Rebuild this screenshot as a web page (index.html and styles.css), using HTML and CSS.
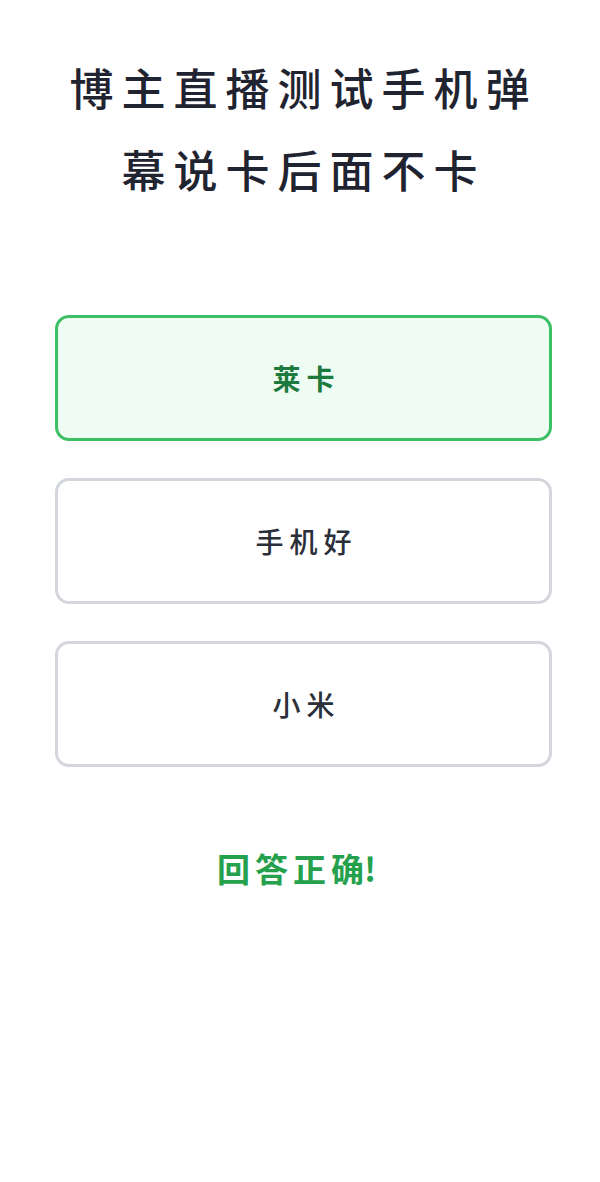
FILE: index.html
```html
<!DOCTYPE html>
<html lang="zh-CN">
<head>
<meta charset="utf-8">
<link rel="stylesheet" href="styles.css">
</head>
<body>
<main class="quiz">
  <h1 class="question">博主直播测试手机弹<br>幕说卡后面不卡</h1>
  <div class="options">
    <button class="option correct">莱卡</button>
    <button class="option">手机好</button>
    <button class="option">小米</button>
  </div>
  <p class="feedback"><span class="spaced">回答正</span>确!</p>
</main>
</body>
</html>
```
FILE: styles.css
```css
html, body {
  margin: 0;
  padding: 0;
  background: #ffffff;
}
body {
  font-family: "Noto Sans CJK SC", "Noto Sans", sans-serif;
  color: #1f2430;
}
.quiz {
  display: flex;
  flex-direction: column;
  align-items: center;
  padding: 46px 48px 0 55px;
}
.question {
  margin: 0;
  font-size: 44px;
  font-weight: 500;
  line-height: 82px;
  letter-spacing: 8px;
  text-align: center;
  color: #1f2430;
}
.options {
  width: 100%;
  display: flex;
  flex-direction: column;
  gap: 37px;
  margin-top: 105px;
}
.option {
  box-sizing: border-box;
  width: 100%;
  height: 126px;
  border: 3px solid #d4d6dd;
  border-radius: 14px;
  background: #ffffff;
  font-family: "Noto Sans CJK SC", "Noto Sans", sans-serif;
  font-size: 28px;
  font-weight: 500;
  letter-spacing: 6px;
  color: #2a2f3a;
  padding: 0 0 0 6px;
}
.option.correct {
  border-color: #3dbf66;
  background: #effcf3;
  color: #1d7a3e;
  font-weight: 700;
}
.feedback {
  margin: 77px 14px 0 0;
  font-size: 33px;
  font-weight: 700;
  color: #25a04c;
}
.spaced {
  letter-spacing: 5px;
}
```
